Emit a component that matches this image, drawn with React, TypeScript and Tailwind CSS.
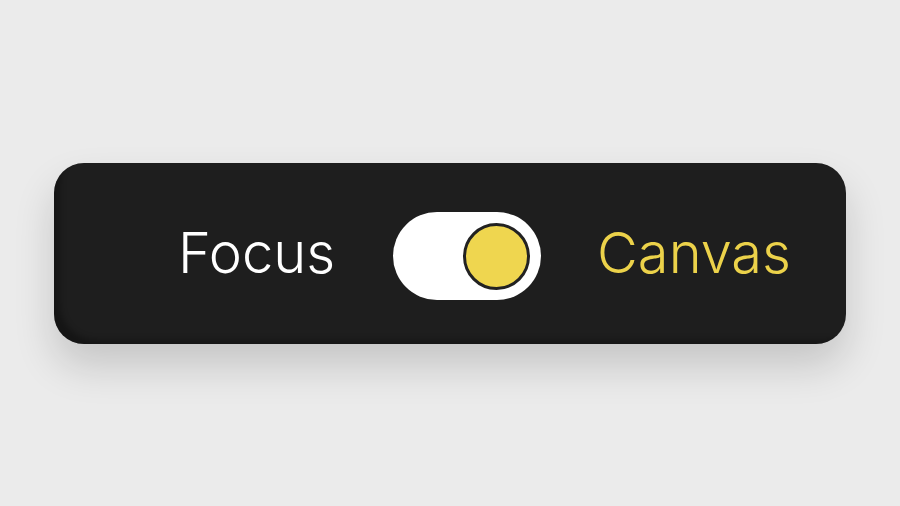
import React, { useState } from 'react';

const App: React.FC = () => {
  const [canvas, setCanvas] = useState(true);

  return (
    <div className="w-full h-[506px] bg-[#ebebeb] flex items-center justify-center font-['Inter','Liberation_Sans',sans-serif]">
      {/* Mode switch card */}
      <div className="w-[792px] h-[181px] rounded-[30px] bg-[#1e1e1e] flex items-center justify-end pr-[55px] shadow-[inset_12px_-10px_6px_-6px_rgba(0,0,0,0.3),0_22px_40px_rgba(0,0,0,0.16)]">
        <span className={`text-[56px] font-[350] leading-none ${canvas ? 'text-white' : 'text-[#ecd24a]'}`}>
          Focus
        </span>
        <button
          onClick={() => setCanvas(!canvas)}
          className={`ml-[58px] w-[148px] h-[88px] rounded-full bg-white flex items-center px-[11px] mt-[6px] ${canvas ? 'justify-end' : 'justify-start'}`}
        >
          <span className="block w-[67px] h-[67px] rounded-full bg-[#efd64f] border-[3px] border-[#222222]" />
        </button>
        <span className={`ml-[56px] text-[56px] font-[350] leading-none ${canvas ? 'text-[#ecd24a]' : 'text-white'}`}>
          Canvas
        </span>
      </div>
    </div>
  );
};

export default App;
